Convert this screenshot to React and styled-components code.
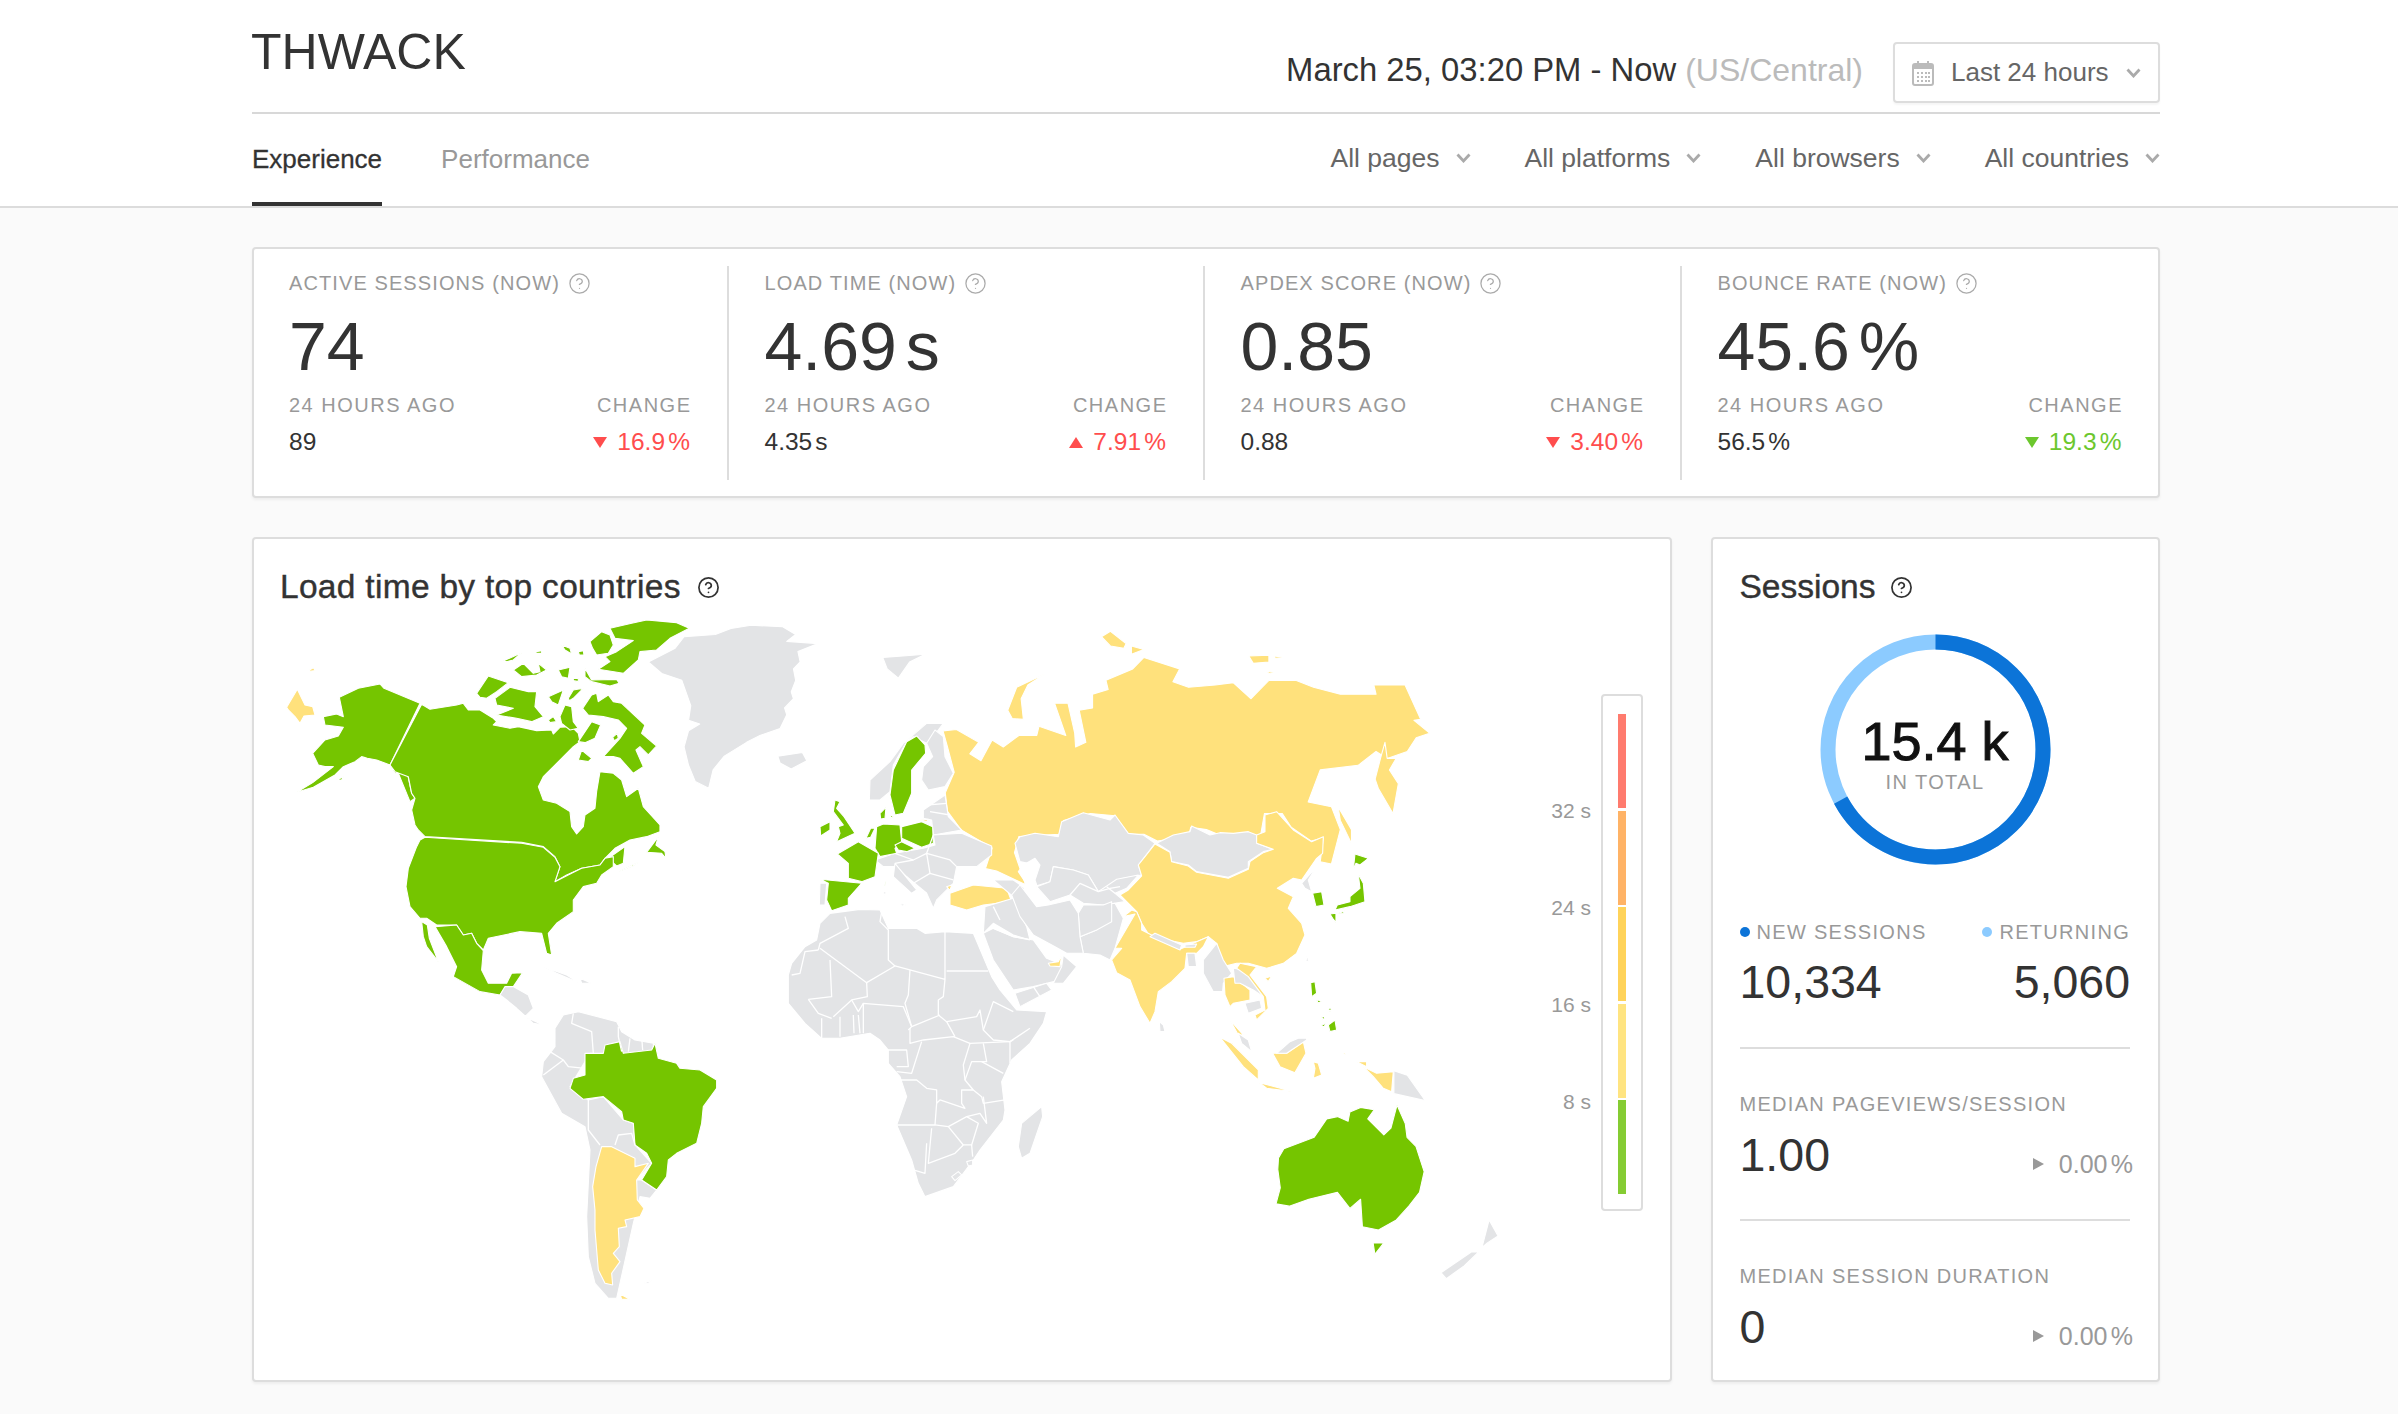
import React from "react";
import styled, { createGlobalStyle } from "styled-components";
import { CircleHelp } from "lucide-react";

const GREEN = "#75c500";
const YELLOW = "#ffe17c";
const GREY = "#e3e4e6";
const WHITE = "#fff";

// map shapes are traced over crops of the screenshot, each group keeps its crop's offset and scale
const mapGroups = [
  {
    at: "translate(260 600) scale(.4464 .4592)",
    land: [
      [GREY, "870,135 930,105 950,80 1020,75 1055,62 1100,55 1170,58 1200,75 1180,90 1250,95 1205,112 1210,135 1195,150 1200,175 1190,200 1195,215 1175,235 1180,250 1165,280 1120,295 1090,310 1040,340 1015,370 1005,410 975,395 960,360 950,320 960,285 985,270 960,262 965,230 945,175 900,160"],
      [GREY, "1160,340 1215,332 1225,350 1190,368 1165,355"],
    ],
  },
  {
    at: "translate(760 600) scale(.4464 .4592)",
    land: [
      [YELLOW, "410,285 440,282 490,310 470,335 495,350 520,305 545,320 580,295 620,295 625,275 685,295 660,225 690,225 705,290 707,320 730,310 715,240 745,235 745,205 780,195 775,175 835,150 860,125 940,150 925,178 960,190 1020,185 1060,180 1100,215 1140,175 1200,175 1240,190 1300,205 1380,205 1375,185 1445,185 1480,260 1465,262 1500,290 1470,300 1450,330 1405,345 1380,330 1340,360 1255,370 1228,440 1280,450 1300,500 1280,575 1255,570 1262,518 1235,525 1190,495 1170,465 1130,465 1120,520 1050,520 1000,500 965,495 960,515 890,525 860,510 825,510 795,470 740,465 680,480 670,510 580,515 570,550 595,620 530,590 505,585 520,540 450,500 420,460 415,420 435,375 420,320"],
      [YELLOW, "1400,310 1405,345 1425,345 1410,370 1430,400 1418,465 1385,410 1378,390 1390,345"],
      [YELLOW, "1295,450 1325,500 1325,530 1300,480"],
      [YELLOW, "555,240 575,190 640,160 600,185 585,215 590,260 565,258"],
      [YELLOW, "765,80 785,68 820,95 815,105 785,100"],
      [YELLOW, "832,100 860,108 832,118"],
      [YELLOW, "1095,122 1140,120 1140,135 1105,138"],
      [YELLOW, "1150,122 1180,125 1155,127"],
      [YELLOW, "1135,155 1155,158 1140,160"],
      [GREY, "275,125 320,122 370,118 335,135 310,170 285,150"],
      [GREY, "1420,1025 1450,1035 1490,1090 1420,1075"],
    ],
  },
  {
    // north america
    at: "translate(280 610) scale(.3333)",
    land: [
      [YELLOW, "20,292 52,238 75,285 98,290 105,315 72,318 60,340 45,320 25,300"],
      [YELLOW, "88,180 100,173 106,182 90,184"],
      [GREEN, "178,262 235,235 300,222 312,235 420,280 330,465 290,450 262,445 245,440 225,455 190,470 165,495 100,532 50,547 98,518 160,470 135,470 115,465 98,430 135,390 175,378 190,352 135,345 130,320 170,312 190,320"],
      [GREEN, "170,510 190,500 185,510"],
      [GREEN, "330,468 345,490 380,480 395,550 405,565 390,575 355,490"],
      [GREEN, "425,283 450,298 530,285 550,280 565,300 600,300 640,325 650,335 640,345 690,355 715,350 770,362 815,360 820,372 840,352 875,350 895,370 900,395 880,410 830,460 790,500 775,530 790,570 830,580 870,605 875,650 890,672 910,650 915,615 945,595 950,545 960,485 1000,490 1025,510 1040,560 1075,535 1090,590 1140,645 1140,665 1100,680 1050,690 1005,715 975,745 960,765 905,775 860,795 825,815 840,770 825,740 790,710 725,697 435,680 415,660 405,645 395,600 405,565 395,550 385,500 345,485 330,465"],
      [GREEN, "985,745 1035,710 1030,760 1010,768"],
      [GREEN, "1015,785 1075,757 1060,768"],
      [GREEN, "1100,727 1135,680 1128,705 1155,725 1158,745 1145,730"],
      [GREEN, "990,55 1055,40 1100,30 1190,38 1228,55 1170,85 1130,120 1080,125 1075,150 1030,190 955,178 990,155 975,140 1010,125 1060,92 1005,85"],
      [GREEN, "930,95 965,65 990,75 1000,105 985,130 950,135 938,115"],
      [GREEN, "915,175 935,210 1010,208 1018,220 990,228 935,215 915,200"],
      [GREEN, "665,155 725,128 700,150 680,155"],
      [GREEN, "700,180 730,160 760,190 780,185 775,160 800,180 770,195 725,200"],
      [GREEN, "768,125 785,122 785,130 768,130"],
      [GREEN, "845,105 870,115 875,132 855,120"],
      [GREEN, "895,125 910,122 912,135 898,135"],
      [GREEN, "835,180 870,172 865,205 845,200"],
      [GREEN, "880,205 895,205 895,215 880,212"],
      [GREEN, "590,250 625,198 685,218 650,245 620,265 600,262"],
      [GREEN, "645,265 690,232 745,245 770,245 765,290 790,320 755,335 710,325 650,315 700,295 650,285"],
      [GREEN, "805,260 850,240 835,285 815,275"],
      [GREEN, "865,265 880,240 910,235 880,265 868,272"],
      [GREEN, "840,320 855,285 875,290 880,335 895,355 870,360 845,340"],
      [GREEN, "805,330 820,320 830,335 810,338"],
      [GREEN, "908,295 935,255 950,250 955,275 985,255 1000,275 1025,280 1095,345 1085,370 1130,408 1105,435 1080,410 1068,420 1090,470 1060,490 1020,445 1000,440 970,440 1020,385 1040,355 1015,330 970,320 925,315"],
      [GREEN, "998,382 1012,370 1015,385 1003,392"],
      [GREEN, "895,395 935,335 962,345 945,385 915,398"],
      [GREEN, "895,450 905,420 935,445 925,455"],
      [GREEN, "435,682 725,700 790,712 825,742 840,770 825,815 875,790 905,775 960,765 975,745 1000,740 1000,770 965,795 950,820 910,830 895,850 880,870 880,905 830,940 805,970 815,1035 800,1030 785,970 720,965 625,985 610,1020 590,1000 575,970 550,975 530,945 470,945 440,925 420,925 390,890 378,830 385,775 410,710 420,690"],
      [GREEN, "465,950 530,945 550,975 575,970 590,1000 610,1022 605,1080 625,1120 680,1120 695,1090 728,1088 700,1130 670,1140 660,1155 600,1145 520,1100 530,1070 500,1010"],
      [GREEN, "425,935 442,945 448,985 475,1055 440,1010 430,980"],
      [GREY, "660,1155 675,1130 700,1130 745,1155 760,1195 735,1220 790,1245 760,1240 710,1195 680,1170"],
      [GREY, "790,1070 860,1095 900,1120 830,1090"],
      [GREY, "900,1105 935,1120 905,1120"],
    ],
  },
  {
    // south america
    at: "translate(520 990) scale(.3333)",
    land: [
      [GREY, "105,115 130,75 175,65 290,95 305,125 345,150 400,160 400,200 210,190 150,290 205,330 250,320 310,390 340,400 345,465 395,520 350,570 365,570 410,600 390,625 360,620 340,700 300,880 290,925 265,925 225,880 205,800 200,680 210,480 195,410 125,370 65,260 70,215 105,170"],
      [GREEN, "195,190 250,190 255,165 300,155 310,190 395,180 405,160 415,205 470,220 480,235 540,240 590,270 590,295 550,350 545,400 530,460 470,490 445,510 440,560 410,600 365,570 395,520 380,490 345,465 340,400 310,390 305,365 250,320 190,328 150,295 160,265 195,255"],
      [YELLOW, "245,470 275,470 345,505 345,530 385,520 350,570 352,630 372,655 360,680 315,690 320,710 295,715 298,770 280,790 300,815 275,850 278,885 255,880 235,840 225,720 225,660 218,590 228,530"],
      [YELLOW, "300,912 330,928 305,928"],
      [GREY, "370,880 395,870 385,880"],
    ],
    lines: [
      "160,70 155,100 215,125 220,190",
      "295,110 295,140 305,185",
      "330,145 325,185",
      "365,140 368,180",
      "90,185 130,210 145,230 195,235",
      "130,210 70,255",
      "205,330 205,420 240,465",
      "285,465 295,435 335,430 345,465",
    ],
  },
  {
    // europe and the middle east
    at: "translate(780 720) scale(.3333)",
    land: [
      [GREY, "268,240 270,180 330,125 370,70 440,10 490,10 475,30 440,70 400,50 380,65 340,135 330,215 300,240"],
      [GREY, "440,70 465,30 490,50 495,110 520,160 495,200 445,210 425,180 430,140 458,110"],
      [GREY, "430,270 495,225 505,290 545,330 460,345 455,300 430,295"],
      [GREY, "285,420 345,400 430,385 465,375 460,345 545,340 635,378 635,405 590,440 530,440 520,490 470,540 460,565 440,520 400,490 350,440 310,440"],
      [GREY, "345,430 410,510 395,520 340,470"],
      [GREY, "360,550 380,555 365,558"],
      [GREY, "310,515 318,515 316,530"],
      [GREY, "120,490 140,490 135,555 118,555"],
      [YELLOW, "420,300 445,298 440,305"],
      [GREEN, "380,65 410,48 435,75 437,100 395,150 395,220 370,280 345,285 330,225 340,150"],
      [GREEN, "165,240 180,245 170,265 192,290 225,340 170,365 180,340 175,320 190,315 160,275"],
      [GREEN, "120,320 150,305 150,330 122,348"],
      [GREEN, "300,280 318,262 315,295 302,297"],
      [GREEN, "332,285 340,290 332,295"],
      [GREEN, "290,320 310,312 360,315 365,365 345,385 350,400 300,410 285,385"],
      [GREEN, "365,320 425,305 458,320 460,370 425,382 365,355"],
      [GREEN, "345,375 365,365 405,385 380,395 355,390"],
      [GREEN, "258,355 272,325 285,325 272,352"],
      [GREEN, "172,402 235,365 295,400 285,470 245,485 205,475 205,430"],
      [GREEN, "120,478 245,490 205,535 205,555 155,572 140,540 145,490"],
      [GREEN, "312,485 316,485 315,498"],
      [YELLOW, "510,520 580,495 680,505 695,545 610,555 560,570 510,555"],
      [YELLOW, "500,500 515,495 510,512"],
      [GREY, "640,480 700,480 735,505 700,530"],
      [GREY, "615,560 700,535 740,620 750,660 700,645 640,610 610,640"],
      [GREY, "610,640 640,625 700,650 760,660 800,715 850,735 840,780 760,800 700,810 640,720"],
      [GREY, "705,820 800,790 815,810 720,860"],
      [GREY, "850,705 890,740 850,790 820,790 845,740"],
      [YELLOW, "805,730 835,725 845,705 840,740 810,738"],
    ],
    lines: [
      "440,400 510,420 530,440",
      "440,400 460,345",
      "345,400 400,420 345,430",
      "380,470 440,520",
      "400,490 450,460 520,480",
      "400,420 440,400 450,460",
      "440,255 500,250",
      "450,275 510,285",
      "640,625 700,650 750,660",
      "640,560 660,600",
      "760,800 780,830",
    ],
  },
  {
    // africa
    at: "translate(780 890) scale(.3333)",
    land: [
      [GREY, "25,255 35,220 75,170 110,150 120,100 150,70 240,58 300,60 325,115 410,115 435,130 495,125 580,130 635,260 660,300 710,360 800,365 790,400 750,460 695,510 665,575 675,660 670,690 600,780 580,810 520,890 435,920 415,880 395,810 350,705 380,620 360,560 325,520 325,480 300,450 270,430 180,445 125,445 75,400 25,340"],
      [GREY, "715,770 725,700 785,650 788,680 750,790 725,805"],
      [GREY, "515,860 535,845 545,855 525,872"],
      [GREY, "560,815 578,810 578,825 565,828"],
    ],
    lines: [
      "120,175 260,278 345,228 495,268 495,125",
      "195,80 205,115 120,160 115,180",
      "305,65 300,95 325,120 325,210 345,228",
      "500,243 625,243",
      "150,210 155,320 85,328",
      "115,180 75,185 60,250 35,255",
      "260,278 262,320 215,330 160,380",
      "85,328 115,370 155,385",
      "390,240 385,315 375,340 395,410 385,420",
      "495,268 490,320 475,330 475,375 500,395 525,440",
      "215,330 235,365 250,340 370,350 395,410",
      "250,340 250,430",
      "125,385 125,445",
      "180,380 180,440",
      "220,375 222,430",
      "235,375 240,430",
      "395,410 480,375",
      "390,415 390,460 430,450 520,440 570,460 690,455 700,450",
      "500,395 590,380 600,360 610,420 640,450 690,455 750,415",
      "610,420 640,335 700,365",
      "690,455 690,520",
      "570,460 550,525 555,570 580,600 545,600 545,640 555,655 480,630 470,640 470,600 440,595 410,570 360,570",
      "425,455 395,550 350,545",
      "320,480 380,480 385,530 350,530",
      "605,515 670,550",
      "610,460 620,515 575,515 555,570",
      "580,600 605,620 610,640 675,630",
      "470,640 465,705 350,705",
      "465,705 505,710 550,765 575,765 595,700 560,680 505,710",
      "560,680 600,670 620,700 610,620",
      "455,715 445,820 525,790 550,765",
      "440,760 435,850 400,840",
      "575,765 578,800",
    ],
  },
  {
    // asia
    at: "translate(1000 790) scale(.3333)",
    land: [
      [GREY, "45,160 60,140 105,130 175,140 185,95 250,68 330,90 345,75 385,130 430,135 465,160 435,200 415,225 425,255 370,265 320,290 295,305 265,255 220,240 160,230 150,275 100,290 110,225 60,215"],
      [WHITE, "70,225 105,205 120,225 105,270 115,300 145,345 110,350 85,290 55,245"],
      [GREY, "150,275 160,230 220,240 265,255 295,305 350,268 415,255 380,295 345,310 375,335 310,345 250,340 210,315 150,335 110,290"],
      [GREY, "470,160 520,135 570,125 575,108 630,135 660,128 700,130 745,125 770,135 770,160 820,178 790,185 745,215 745,235 685,262 590,245 565,225 515,215 510,185"],
      [YELLOW, "360,315 385,300 425,258 415,225 435,200 465,162 510,187 515,215 565,228 590,247 685,265 745,238 750,215 790,188 820,178 770,160 770,135 795,125 795,75 830,65 880,120 935,155 970,140 968,190 950,205 905,270 880,265 832,295 880,320 865,355 905,400 915,435 890,490 850,520 800,535 745,520 710,520 670,530 650,460 625,440 590,455 550,460 450,440 425,400 410,365"],
      [YELLOW, "335,510 365,475 345,475 405,372 370,380 395,360 410,365 425,400 425,420 540,478 590,455 625,440 610,470 590,490 560,490 555,535 515,575 475,605 465,665 450,700 420,650 390,570 350,548"],
      [GREY, "450,440 465,430 545,465 540,480"],
      [GREY, "560,490 585,490 590,530 565,530"],
      [GREY, "555,465 590,462 585,472 555,472"],
      [GREY, "330,510 345,475 370,385 345,340 310,345 290,420 240,440 250,490 300,495"],
      [GREY, "235,370 250,345 310,345 335,335 335,395 290,420 240,440"],
      [GREY, "35,315 60,285 110,350 145,345 210,330 235,370 240,440 250,490 200,490 165,470 100,435 60,380"],
      [GREY, "610,510 650,460 670,510 695,550 670,580 668,605 640,605 610,550"],
      [YELLOW, "672,565 700,560 750,600 750,630 700,640 690,650 675,615"],
      [GREY, "700,535 735,540 790,620 760,600 720,580 705,580"],
      [GREY, "735,640 780,630 785,655 745,670"],
      [YELLOW, "720,520 770,530 750,555 800,620 805,655 770,690 765,675 795,660 790,620 745,560 710,535"],
      [YELLOW, "690,690 730,735 715,735"],
      [GREY, "715,730 745,750 755,785 725,760"],
      [YELLOW, "795,565 815,558 805,575"],
      [GREY, "922,490 925,515 918,515"],
      [GREY, "905,280 950,230 925,270 935,305 915,295"],
      [GREEN, "938,310 965,305 972,345 948,350"],
      [GREEN, "1065,192 1105,205 1080,225 1068,220 1060,240"],
      [GREEN, "1075,252 1090,280 1095,335 1050,350 1005,360 1012,345 1050,335 1050,320 1080,295"],
      [GREEN, "990,372 1008,370 1008,398 998,385"],
      [GREEN, "1015,370 1035,362 1030,370"],
      [GREEN, "932,578 945,575 950,610 935,620"],
      [GREEN, "985,705 1005,690 1010,720 990,725"],
      [GREEN, "950,630 965,632 955,640"],
      [GREEN, "985,655 995,655 990,665"],
      [GREEN, "965,680 975,680 970,690"],
      [GREEN, "965,705 980,700 970,712"],
      [GREY, "478,695 490,705 495,725 480,725"],
      [YELLOW, "660,742 695,760 775,840 775,870 730,830"],
      [YELLOW, "778,878 880,905 800,895"],
      [YELLOW, "818,790 860,790 910,755 918,790 885,848 840,830"],
      [GREY, "830,790 870,755 895,745 920,745 920,750 860,790"],
      [YELLOW, "940,815 955,820 965,855 940,865 945,835"],
      [YELLOW, "1090,830 1130,850 1180,845 1175,905 1150,895 1120,860"],
      [YELLOW, "1070,815 1100,815 1100,830"],
      [YELLOW, "1030,788 1038,788 1035,795"],
    ],
    lines: ["210,315 240,280 295,305", "295,305 330,295 360,290", "320,290 345,310"],
  },
  {
    // australia and new zealand
    at: "translate(1100 600) scale(.357 .4592)",
    land: [
      [GREEN, "500,1215 515,1195 600,1170 635,1130 665,1125 695,1135 700,1115 730,1105 768,1110 750,1130 795,1165 815,1150 832,1100 855,1140 860,1170 885,1190 908,1245 895,1290 865,1320 830,1350 780,1372 735,1365 730,1305 700,1325 665,1290 585,1305 530,1320 493,1315 505,1280 498,1240"],
      [GREEN, "765,1400 795,1400 770,1425"],
      [GREY, "955,1465 1040,1420 1060,1420 1020,1450 970,1478"],
      [GREY, "1070,1410 1090,1350 1115,1385 1085,1400"],
    ],
  },
];

const metrics = [
  { label: "ACTIVE SESSIONS (NOW)", value: "74", ago: "89", change: "16.9", dir: "down", tone: "#ff4d4d" },
  { label: "LOAD TIME (NOW)", value: "4.69", unit: "s", ago: "4.35", agoUnit: "s", change: "7.91", dir: "up", tone: "#ff4d4d" },
  { label: "APDEX SCORE (NOW)", value: "0.85", ago: "0.88", change: "3.40", dir: "down", tone: "#ff4d4d" },
  { label: "BOUNCE RATE (NOW)", value: "45.6", unit: "%", ago: "56.5", agoUnit: "%", change: "19.3", dir: "down", tone: "#6cc72e" },
];

const filters = ["All pages", "All platforms", "All browsers", "All countries"];
const scale = ["#ff7b6e", "#ffb366", "#ffd35a", "#ffe481", "#85cc33"];
const scaleLabels = ["32 s", "24 s", "16 s", "8 s"];

const GlobalStyle = createGlobalStyle`
  html, body {
    margin: 0;
    background: #fafafa;
    font-family: "Liberation Sans", Arial, sans-serif;
    color: #333;
  }
  * {
    box-sizing: border-box;
  }
`;

const Header = styled.header`
  background: #fff;
  border-bottom: 2px solid #dcdcdc;
  padding: 0 238px 0 252px;
`;

const TopRow = styled.div`
  display: flex;
  justify-content: space-between;
  height: 114px;
  border-bottom: 2px solid #d8d8d8;
`;

const Title = styled.h1`
  margin: 22px 0 0 -1px;
  font-size: 50px;
  line-height: 60px;
  font-weight: 400;
`;

const RangeGroup = styled.div`
  display: flex;
  align-items: flex-start;
  margin-top: 42px;
`;

const RangeText = styled.div`
  font-size: 32.8px;
  line-height: 40px;
  margin: 8px 30px 0 0;
`;

const Zone = styled.span`
  font-size: 32px;
  color: #bbb;
  margin-left: 9px;
`;

const RangeButton = styled.div`
  display: flex;
  align-items: center;
  width: 267px;
  height: 61px;
  padding: 0 17px;
  border: 2px solid #ddd;
  border-radius: 4px;
  font-size: 26px;
  color: #666;
  box-shadow: 0 2px 2px rgba(0, 0, 0, 0.04);
`;

const RangeLabel = styled.span`
  margin: 0 17px;
  white-space: nowrap;
`;

const NavRow = styled.nav`
  display: flex;
  justify-content: space-between;
  height: 92px;
`;

const Tabs = styled.div`
  display: flex;
  gap: 59px;
`;

const Tab = styled.div`
  padding-top: 30px;
  font-size: 26px;
  line-height: 30px;
  color: ${(p) => (p.$active ? "#333" : "#999")};
  border-bottom: 4px solid ${(p) => (p.$active ? "#333" : "transparent")};
  -webkit-text-stroke: ${(p) => (p.$active ? "0.3px #333" : "0")};
`;

const Filters = styled.div`
  display: flex;
  gap: 54px;
  padding-top: 29px;
`;

const Filter = styled.div`
  display: flex;
  align-items: center;
  gap: 16px;
  height: 30px;
  font-size: 26.5px;
  color: #666;
`;

const Main = styled.main`
  padding: 39px 238px 34px 252px;
  display: flex;
  flex-direction: column;
  gap: 39px;
`;

const Card = styled.section`
  background: #fff;
  border: 2px solid #ddd;
  border-radius: 4px;
  box-shadow: 0 2px 3px rgba(0, 0, 0, 0.05);
`;

const MetricsCard = styled(Card)`
  display: grid;
  grid-template-columns: 474.5px 476px 477px 1fr;
  height: 251px;
  padding: 17px 0;
`;

const MetricCell = styled.div`
  height: 214px;
  padding: 5px 36.5px 0 ${(p) => (p.$first ? "35px" : "36px")};
  border-right: ${(p) => (p.$last ? "none" : "2px solid #ddd")};
`;

const SmallLabel = styled.div`
  font-size: 20px;
  line-height: 24px;
  letter-spacing: 1.1px;
  color: #999;
  white-space: nowrap;
`;

const LabelRow = styled(SmallLabel)`
  display: flex;
  align-items: center;
  gap: 8px;
`;

const BigValue = styled.div`
  margin-top: 16px;
  font-size: 68px;
  line-height: 70px;
`;

const Unit = styled.span`
  margin-left: 0.13em;
`;

const SubGrid = styled.div`
  margin-top: 12px;
  display: grid;
  grid-template-columns: 1fr auto;
  row-gap: 10px;
  justify-items: start;
`;

const SubLabel = styled(SmallLabel)`
  letter-spacing: 1.5px;
`;

const RightLabel = styled(SubLabel)`
  justify-self: end;
  margin-right: -1.5px;
`;

const SubValue = styled.div`
  font-size: 24.5px;
  line-height: 30px;
`;

const Change = styled(SubValue)`
  justify-self: end;
  display: flex;
  align-items: center;
  gap: 10px;
  color: ${(p) => p.$tone};
`;

const Triangle = styled.i`
  width: 0;
  height: 0;
  border-left: 7px solid transparent;
  border-right: 7px solid transparent;
  ${(p) =>
    p.$dir === "up"
      ? `border-bottom: 11px solid ${p.$tone};`
      : `border-top: 11px solid ${p.$tone};`}
`;

const FlatTriangle = styled.i`
  width: 0;
  height: 0;
  border-top: 6px solid transparent;
  border-bottom: 6px solid transparent;
  border-left: 11px solid #999;
`;

const Columns = styled.div`
  display: grid;
  grid-template-columns: 1420px 449.5px;
  gap: 38.5px;
`;

const MapCard = styled(Card)`
  height: 845px;
  padding: 28px 27px 0 26px;
`;

const SectionHead = styled.h2`
  display: flex;
  align-items: center;
  gap: ${(p) => p.$gap || "15px"};
  margin: 0;
  height: 40px;
  font-size: 33.5px;
  font-weight: 400;
  letter-spacing: ${(p) => p.$track || "0"};
  -webkit-text-stroke: 0.4px #333;
  white-space: nowrap;
`;

const MapBody = styled.div`
  display: flex;
`;

const WorldMap = styled.svg`
  display: block;
  width: 1260px;
  height: 760px;
  flex: none;
`;

const Land = styled.polygon`
  fill: ${(p) => p.$fill};
  stroke: #fff;
  stroke-width: 1.1;
  stroke-linejoin: round;
  vector-effect: non-scaling-stroke;
`;

const BorderLine = styled.polyline`
  fill: none;
  stroke: #fff;
  stroke-width: 1.3;
  stroke-linejoin: round;
  vector-effect: non-scaling-stroke;
`;

const ScaleLabels = styled.div`
  width: 51px;
  margin-top: 87px;
  padding-top: 68px;
`;

const ScaleLabel = styled.div`
  display: flex;
  align-items: center;
  justify-content: flex-end;
  height: 97px;
  font-size: 21px;
  color: #999;
  white-space: nowrap;
`;

const ScaleFrame = styled.div`
  display: flex;
  flex-direction: column;
  align-items: center;
  gap: 2.5px;
  width: 42px;
  height: 517px;
  margin: 87px 0 0 10px;
  padding-top: 18px;
  border: 2px solid #ddd;
  border-radius: 4px;
`;

const ScaleStep = styled.div`
  width: 8px;
  height: 94px;
  background: ${(p) => p.$color};
`;

const SessionsCard = styled(Card)`
  height: 845px;
  padding: 28px 28px 0 27px;
`;

const Donut = styled.div`
  position: relative;
  width: 231px;
  height: 231px;
  margin: 27px 0 0 80px;
`;

const DonutCenter = styled.div`
  position: absolute;
  inset: 0;
  padding-top: 9px;
  display: flex;
  flex-direction: column;
  align-items: center;
  justify-content: center;
`;

const DonutTotal = styled.div`
  font-size: 54px;
  line-height: 54px;
  color: #111;
  -webkit-text-stroke: 1px #111;
  white-space: nowrap;
`;

const DonutNote = styled(SmallLabel)`
  margin-top: 2px;
  letter-spacing: 1.4px;
`;

const LegendRow = styled.div`
  display: flex;
  justify-content: space-between;
  margin-top: 55px;
`;

const LegendLabel = styled(SmallLabel)`
  display: flex;
  align-items: center;
  gap: 7px;
  letter-spacing: 1.3px;
`;

const Dot = styled.i`
  width: 10px;
  height: 10px;
  border-radius: 50%;
  background: ${(p) => p.$color};
`;

const TotalsRow = styled.div`
  display: flex;
  justify-content: space-between;
  margin-top: 13px;
  padding-bottom: 40px;
`;

const StatValue = styled.div`
  font-size: 46.5px;
  line-height: 50px;
`;

const StatBlock = styled.div`
  height: 172px;
  padding-top: 43px;
  border-top: 2px solid #ddd;
`;

const StatLabel = styled(SmallLabel)`
  letter-spacing: 1.3px;
`;

const StatRow = styled.div`
  display: flex;
  justify-content: space-between;
  align-items: flex-end;
  margin-top: 13.5px;
`;

const Delta = styled.div`
  display: flex;
  align-items: center;
  gap: 15px;
  margin: 0 -3px 4px 0;
  font-size: 25px;
  line-height: 24px;
  color: #999;
`;

const Chevron = () => (
  <svg width="15" height="10" viewBox="0 0 15 10" style={{ flex: "none" }}>
    <polyline points="1.5,1.5 7.5,8 13.5,1.5" fill="none" stroke="#aaa" strokeWidth="2.8" />
  </svg>
);

const CalendarIcon = () => (
  <svg width="22" height="26" viewBox="0 0 22 26" style={{ flex: "none" }}>
    <rect x="1" y="4" width="20" height="21" rx="2" fill="none" stroke="#bbb" strokeWidth="2" />
    <rect x="1" y="4" width="20" height="5" fill="#bbb" />
    <rect x="5" y="1" width="2" height="5" fill="#bbb" />
    <rect x="15" y="1" width="2" height="5" fill="#bbb" />
    {[5, 9, 13, 16].map((x) =>
      [12, 16, 20].map((y) => <rect key={x + "-" + y} x={x} y={y} width="2" height="2" fill="#bbb" />)
    )}
  </svg>
);

const Metric = ({ m, first, last }) => (
  <MetricCell $first={first} $last={last}>
    <LabelRow>
      {m.label}
      <CircleHelp size={23} color="#aaa" strokeWidth={1.3} />
    </LabelRow>
    <BigValue>
      {m.value}
      {m.unit && <Unit>{m.unit}</Unit>}
    </BigValue>
    <SubGrid>
      <SubLabel>24 HOURS AGO</SubLabel>
      <RightLabel>CHANGE</RightLabel>
      <SubValue>
        {m.ago}
        {m.agoUnit && <Unit>{m.agoUnit}</Unit>}
      </SubValue>
      <Change $tone={m.tone}>
        <Triangle $dir={m.dir} $tone={m.tone} />
        <span>
          {m.change}
          <Unit>%</Unit>
        </span>
      </Change>
    </SubGrid>
  </MetricCell>
);

const R = 107.5;
const CIRC = 2 * Math.PI * R;
const NEW_SHARE = 10334 / 15394;

const App = () => {
  return (
    <React.Fragment>
      <GlobalStyle />
      <Header>
        <TopRow>
          <Title>THWACK</Title>
          <RangeGroup>
            <RangeText>
              March 25, 03:20 PM - Now<Zone>(US/Central)</Zone>
            </RangeText>
            <RangeButton>
              <CalendarIcon />
              <RangeLabel>Last 24 hours</RangeLabel>
              <Chevron />
            </RangeButton>
          </RangeGroup>
        </TopRow>
        <NavRow>
          <Tabs>
            <Tab $active>Experience</Tab>
            <Tab>Performance</Tab>
          </Tabs>
          <Filters>
            {filters.map((f) => (
              <Filter key={f}>
                {f}
                <Chevron />
              </Filter>
            ))}
          </Filters>
        </NavRow>
      </Header>
      <Main>
        <MetricsCard>
          {metrics.map((m, i) => (
            <Metric key={m.label} m={m} first={i === 0} last={i === 3} />
          ))}
        </MetricsCard>
        <Columns>
          <MapCard>
            <SectionHead $track="0.3px" $gap="16px">
              Load time by top countries
              <CircleHelp size={23} color="#333" strokeWidth={1.8} />
            </SectionHead>
            <MapBody>
              <WorldMap viewBox="280 607 1260 760">
                {mapGroups.map((group) => (
                  <g key={group.at} transform={group.at}>
                    {group.land.map(([fill, points]) => (
                      <Land key={points} $fill={fill} points={points} />
                    ))}
                    {(group.lines || []).map((points) => (
                      <BorderLine key={points} points={points} />
                    ))}
                  </g>
                ))}
              </WorldMap>
              <ScaleLabels>
                {scaleLabels.map((l) => (
                  <ScaleLabel key={l}>{l}</ScaleLabel>
                ))}
              </ScaleLabels>
              <ScaleFrame>
                {scale.map((c) => (
                  <ScaleStep key={c} $color={c} />
                ))}
              </ScaleFrame>
            </MapBody>
          </MapCard>
          <SessionsCard>
            <SectionHead>
              Sessions
              <CircleHelp size={23} color="#333" strokeWidth={1.8} />
            </SectionHead>
            <Donut>
              <svg width="231" height="231" viewBox="0 0 231 231">
                <circle cx="115.5" cy="115.5" r={R} fill="none" stroke="#8ccbff" strokeWidth="15" />
                <circle
                  cx="115.5"
                  cy="115.5"
                  r={R}
                  fill="none"
                  stroke="#0c74d8"
                  strokeWidth="15"
                  strokeDasharray={`${CIRC * NEW_SHARE} ${CIRC}`}
                  transform="rotate(-90 115.5 115.5)"
                />
              </svg>
              <DonutCenter>
                <DonutTotal>15.4 k</DonutTotal>
                <DonutNote>IN TOTAL</DonutNote>
              </DonutCenter>
            </Donut>
            <LegendRow>
              <LegendLabel>
                <Dot $color="#0c74d8" />
                NEW SESSIONS
              </LegendLabel>
              <LegendLabel>
                <Dot $color="#8ccbff" />
                RETURNING
              </LegendLabel>
            </LegendRow>
            <TotalsRow>
              <StatValue>10,334</StatValue>
              <StatValue>5,060</StatValue>
            </TotalsRow>
            <StatBlock>
              <StatLabel>MEDIAN PAGEVIEWS/SESSION</StatLabel>
              <StatRow>
                <StatValue>1.00</StatValue>
                <Delta>
                  <FlatTriangle />
                  <span>
                    0.00<Unit>%</Unit>
                  </span>
                </Delta>
              </StatRow>
            </StatBlock>
            <StatBlock>
              <StatLabel>MEDIAN SESSION DURATION</StatLabel>
              <StatRow>
                <StatValue>0</StatValue>
                <Delta>
                  <FlatTriangle />
                  <span>
                    0.00<Unit>%</Unit>
                  </span>
                </Delta>
              </StatRow>
            </StatBlock>
          </SessionsCard>
        </Columns>
      </Main>
    </React.Fragment>
  );
};

export default App;
